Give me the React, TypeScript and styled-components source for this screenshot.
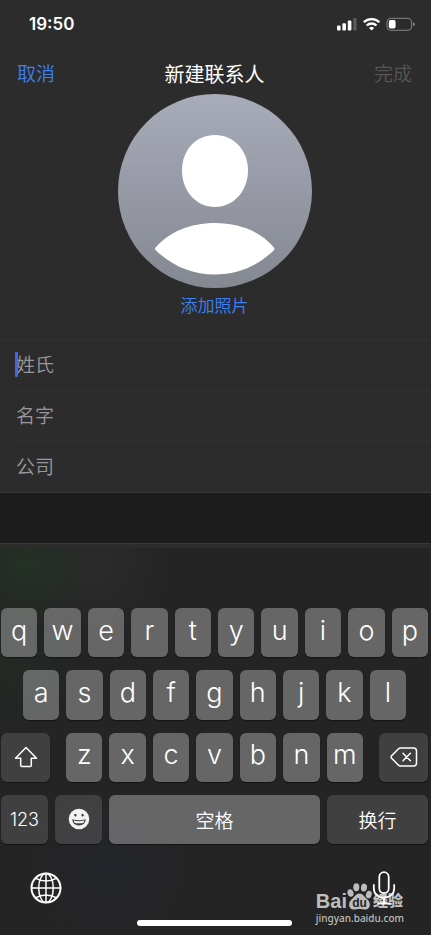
import React from "react";
import styled, { createGlobalStyle } from "styled-components";

const GlobalStyle = createGlobalStyle`
  *, *::before, *::after { box-sizing: border-box; }
  html, body { margin: 0; background: #fff; }
  body, button, input {
    font-family: Inter, "Noto Sans CJK SC", sans-serif;
  }
  button { margin: 0; padding: 0; border: 0; background: none; color: inherit; }
`;

const Screen = styled.div`
  display: flex;
  flex-direction: column;
  min-height: 100vh;
  margin-right: 1px;
  background: #2c2c2c;
  color: #fff;
  overflow: hidden;
`;

const StatusBar = styled.div`
  display: flex;
  align-items: center;
  justify-content: space-between;
  height: 48px;
  padding: 0 16px 0 29px;
`;

const Clock = styled.time`
  font-size: 17px;
  line-height: 20px;
  font-weight: 600;
`;

const StatusIcons = styled.svg`
  display: block;
  width: 78px;
  height: 14px;
`;

const NavBar = styled.header`
  display: grid;
  grid-template-columns: 1fr auto 1fr;
  align-items: center;
  height: 46px;
  padding: 8px 19px 0 17px;
`;

const NavButton = styled.button<{ $end?: boolean }>`
  justify-self: ${(p) => (p.$end ? "end" : "start")};
  font-size: 19px;
  line-height: 28px;
  font-weight: 350;
  color: #3c82f6;
  &:disabled { color: #565656; }
`;

const Title = styled.h1`
  margin: 0;
  font-size: 20px;
  line-height: 28px;
  font-weight: 400;
`;

const PhotoArea = styled.section`
  display: flex;
  flex-direction: column;
  align-items: center;
  gap: 5px;
  height: 245px;
  padding-right: 2px;
`;

const Avatar = styled.svg`
  display: block;
  width: 194px;
  height: 194px;
`;

const PhotoButton = styled.button`
  font-size: 17px;
  line-height: 26px;
  font-weight: 350;
  color: #3c82f6;
`;

const Fields = styled.form`
  border-top: 1px solid #323232;
  border-bottom: 1px solid #383838;
`;

const Field = styled.label`
  position: relative;
  display: flex;
  align-items: center;
  height: 51px;
  margin-left: 15px;
  &:first-child { height: 50px; }
  & + & { border-top: 1px solid #333; }
`;

const Caret = styled.span`
  position: absolute;
  left: 0;
  top: 12px;
  width: 3px;
  height: 25px;
  border-radius: 1px;
  background: #4466e8;
`;

const TextInput = styled.input`
  width: 100%;
  padding: 2px 0 0 1px;
  border: 0;
  outline: 0;
  background: transparent;
  color: #fff;
  font-size: 19px;
  line-height: 28px;
  font-weight: 350;
  &::placeholder { color: #98989c; opacity: 1; }
`;

const Gap = styled.div`
  height: 50px;
  background: #1c1c1c;
`;

const NextGroup = styled.div`
  height: 5px;
  border-top: 1px solid #383838;
`;

const Keyboard = styled.section`
  display: flex;
  flex: 1;
  flex-direction: column;
  padding: 60px 3px 0 1px;
  background:
    radial-gradient(circle at 25px 16px, rgba(36, 52, 38, 0.8), rgba(36, 52, 38, 0) 70px),
    radial-gradient(circle at 95px 14px, rgba(48, 48, 48, 0.6), rgba(48, 48, 48, 0) 80px),
    radial-gradient(circle at 15px 120px, rgba(34, 46, 36, 0.6), rgba(34, 46, 36, 0) 60px),
    radial-gradient(circle at 110px 320px, rgba(36, 38, 46, 0.7), rgba(36, 38, 46, 0) 90px),
    #242424;
`;

const Keys = styled.div`
  display: grid;
  grid-template-rows: repeat(4, 1fr);
  gap: 13px;
  height: 236px;
`;

const KeyRow = styled.div<{ $columns: string; $inset?: boolean }>`
  display: grid;
  grid-template-columns: ${(p) => p.$columns};
  gap: 7px;
  padding: ${(p) => (p.$inset ? "0 22px" : "0")};
`;

const LetterRow = styled.div`
  display: grid;
  grid-template-columns: 49px 1fr 49px;
  gap: 16px;
`;

const Key = styled.button<{ $dark?: boolean }>`
  display: flex;
  align-items: center;
  justify-content: center;
  min-width: 0;
  border-radius: 6px;
  background: ${(p) => (p.$dark ? "rgba(255, 255, 255, 0.13)" : "rgba(255, 255, 255, 0.3)")};
  box-shadow: 0 1px 1px rgba(0, 0, 0, 0.45);
`;

const LetterKey = styled(Key)`
  padding-bottom: 4px;
  font-size: 27px;
  line-height: 34px;
  font-weight: 350;
`;

const NumberKey = styled(Key)`
  padding-top: 2px;
  font-size: 18px;
  line-height: 24px;
  font-weight: 350;
`;

const WordKey = styled(Key)`
  padding-top: 6px;
  font-size: 19px;
  line-height: 24px;
  font-weight: 350;
`;

const Icon = styled.svg<{ $w: number; $h: number }>`
  display: block;
  width: ${(p) => p.$w}px;
  height: ${(p) => p.$h}px;
`;

const Footer = styled.footer`
  position: relative;
  display: flex;
  flex: 1;
  flex-direction: column;
  align-items: center;
  justify-content: space-between;
  padding: 27px 29px 9px;
`;

const Tools = styled.div`
  position: relative;
  display: flex;
  align-items: center;
  justify-content: space-between;
  width: 100%;
  padding-right: 3px;
`;

const ToolButton = styled.button`
  display: flex;
`;

const HomeIndicator = styled.div`
  width: 155px;
  height: 6px;
  border-radius: 3px;
  background: #fff;
`;

const Watermark = styled.div`
  position: absolute;
  right: 24px;
  bottom: 10px;
  display: flex;
  flex-direction: column;
  color: #bdbdbd;
`;

const Brand = styled.div`
  display: flex;
  align-items: flex-end;
  height: 28px;
  font-family: "Liberation Sans", "Noto Sans CJK SC", sans-serif;
  font-size: 20px;
  line-height: 20px;
  font-weight: 700;
`;

const BrandSuffix = styled.span`
  margin-left: 1px;
  font-size: 15px;
  line-height: 20px;
  font-weight: 900;
`;

const SiteName = styled.div`
  font-family: "Noto Sans", sans-serif;
  font-size: 10px;
  line-height: 14px;
  font-weight: 500;
`;

const fields = ["姓氏", "名字", "公司"];

const letters = (row: string) =>
  row.split("").map((c) => (
    <LetterKey key={c} type="button">
      {c}
    </LetterKey>
  ));

export default function App() {
  return (
    <>
      <GlobalStyle />
      <Screen>
        <StatusBar>
          <Clock>19:50</Clock>
          <StatusIcons viewBox="0 0 78 14" fill="#fff" aria-hidden="true">
            <rect x="0" y="8.5" width="3.6" height="5" rx="1" />
            <rect x="5.4" y="6.3" width="3.6" height="7.2" rx="1" />
            <rect x="10.8" y="3.6" width="3.6" height="9.9" rx="1" />
            <rect x="16.2" y="1" width="3.4" height="12.5" rx="1" fill="#5a5a5a" />
            <g fill="none" stroke="#fff" strokeWidth="2.3">
              <path d="M26.800 5.200A11.300 11.300 0 0 1 42.400 5.200" />
              <path d="M29.700 8.500A7 7 0 0 1 39.500 8.500" />
            </g>
            <path d="M32 10.900a3.900 3.900 0 0 1 5.200 0L34.600 13.600z" />
            <rect x="50" y="1.3" width="24.6" height="12" rx="3.6" fill="none" stroke="#858585" />
            <rect x="51.8" y="3.1" width="6.8" height="8.4" rx="1.8" />
            <path d="M76 5.300q1.800.6 1.800 2t-1.800 2z" fill="#858585" />
          </StatusIcons>
        </StatusBar>

        <NavBar>
          <NavButton type="button">取消</NavButton>
          <Title>新建联系人</Title>
          <NavButton type="button" $end disabled>
            完成
          </NavButton>
        </NavBar>

        <PhotoArea>
          <Avatar viewBox="0 0 194 194" aria-hidden="true">
            <defs>
              <linearGradient id="avatarFill" x1="0" y1="0" x2="0" y2="1">
                <stop offset="0" stopColor="#a8abb9" />
                <stop offset="1" stopColor="#848891" />
              </linearGradient>
            </defs>
            <circle cx="97" cy="97" r="97" fill="url(#avatarFill)" />
            <path
              fill="#fff"
              d="M97 41c19 0 33 15.500 33 35.500S116 113 97 113 64 97 64 76.500 78 41 97 41z"
            />
            <path
              fill="#fff"
              d="M37.500 153.500C51 138 72 129 97 129s46 9 59 24.500q1 1.200 0 2.400C140 172 120 180.500 97 180.500S54 172 37.500 155.900q-1-1.200 0-2.400z"
            />
          </Avatar>
          <PhotoButton type="button">添加照片</PhotoButton>
        </PhotoArea>

        <Fields>
          {fields.map((name, i) => (
            <Field key={name}>
              <TextInput type="text" placeholder={name} aria-label={name} />
              {i === 0 && <Caret />}
            </Field>
          ))}
        </Fields>
        <Gap />
        <NextGroup />

        <Keyboard>
          <Keys>
            <KeyRow $columns="repeat(10, 1fr)">{letters("qwertyuiop")}</KeyRow>
            <KeyRow $columns="repeat(9, 1fr)" $inset>
              {letters("asdfghjkl")}
            </KeyRow>
            <LetterRow>
              <Key type="button" $dark aria-label="Shift">
                <Icon $w={24} $h={22} viewBox="0 0 24 22" fill="none" stroke="#fff" strokeWidth="1.5" strokeLinejoin="round">
                  <path d="M12 1.500 22.500 12.300H17.300V19.200Q17.300 20.500 16 20.500H8Q6.700 20.500 6.700 19.200V12.300H1.500z" />
                </Icon>
              </Key>
              <KeyRow $columns="repeat(7, 1fr)">{letters("zxcvbnm")}</KeyRow>
              <Key type="button" $dark aria-label="Delete">
                <Icon $w={28} $h={22} viewBox="0 0 28 22" fill="none" stroke="#fff" strokeWidth="1.5" strokeLinecap="round" strokeLinejoin="round">
                  <path d="M10.500 2H23.500Q26.500 2 26.500 5V17Q26.500 20 23.500 20H10.500Q9.300 20 8.300 19L1.600 12.200Q.6 11 1.600 9.800L8.300 3Q9.300 2 10.500 2z" />
                  <path d="M13 7.300l7.400 7.400M20.400 7.300L13 14.700" />
                </Icon>
              </Key>
            </LetterRow>
            <KeyRow $columns="47px 47px 1fr 101px">
              <NumberKey type="button" $dark>
                123
              </NumberKey>
              <Key type="button" $dark aria-label="Emoji">
                <Icon $w={22} $h={22} viewBox="0 0 22 22">
                  <circle cx="11" cy="11" r="10.3" fill="#f2f2f2" />
                  <ellipse cx="7.4" cy="7.2" rx="1.1" ry="1.4" fill="#404040" />
                  <ellipse cx="14.6" cy="7.2" rx="1.1" ry="1.4" fill="#404040" />
                  <path d="M4.300 11.300Q11 13.300 17.700 11.300C17.500 15.500 14.800 17.500 11 17.500S4.500 15.500 4.300 11.300z" fill="#404040" />
                  <path d="M5.600 12.600Q11 14 16.400 12.600L15.600 14.700Q11 15.900 6.400 14.700z" fill="#f2f2f2" />
                </Icon>
              </Key>
              <WordKey type="button">空格</WordKey>
              <WordKey type="button" $dark>
                换行
              </WordKey>
            </KeyRow>
          </Keys>

          <Footer>
            <Watermark>
              <Brand>
                Bai
                <Icon $w={25} $h={28} viewBox="0 0 25 28" fill="#bdbdbd" aria-hidden="true">
                  <ellipse cx="3.5" cy="10" rx="3" ry="3.8" transform="rotate(-15 3.500 10)" />
                  <ellipse cx="9.3" cy="4.2" rx="3" ry="4" />
                  <ellipse cx="17" cy="4.6" rx="3" ry="4" transform="rotate(8 17 4.600)" />
                  <ellipse cx="21.8" cy="11.5" rx="2.9" ry="3.8" transform="rotate(15 21.800 11.500)" />
                  <path d="M12.500 10.500C16 10.500 17.500 14 20 16C24.500 19.500 23.500 26.500 18.500 26.500C16 26.500 15 26 12.500 26S9 26.500 6.500 26.500C1.500 26.500 .5 19.500 5 16C7.500 14 9 10.500 12.500 10.500z" />
                  <text x="12.5" y="24" textAnchor="middle" fill="#242424" fontFamily="Liberation Sans, sans-serif" fontSize="12" fontWeight="700">
                    du
                  </text>
                </Icon>
                <BrandSuffix>经验</BrandSuffix>
              </Brand>
              <SiteName>jingyan.baidu.com</SiteName>
            </Watermark>
            <Tools>
              <ToolButton type="button" aria-label="Next keyboard">
                <Icon $w={32} $h={32} viewBox="0 0 32 32" fill="none" stroke="#fff" strokeWidth="1.5">
                  <circle cx="16" cy="16" r="14.5" strokeWidth="2" />
                  <ellipse cx="16" cy="16" rx="7.3" ry="14.5" />
                  <path d="M16 1.500V30.500M1.500 16H30.500M5.800 6.300Q16 11.800 26.200 6.300M5.800 25.700Q16 20.200 26.200 25.700" />
                </Icon>
              </ToolButton>
              <ToolButton type="button" aria-label="Dictate">
                <Icon $w={24} $h={34} viewBox="0 0 24 34" fill="none" stroke="#fff" strokeWidth="1.8" strokeLinecap="round">
                  <rect x="7.3" y="1.2" width="9.4" height="21" rx="4.7" />
                  <path d="M1.800 14V17.200C1.800 23 6 26.500 12 26.500S22.200 23 22.200 17.200V14M12 26.500V32.300M6 32.500H18" />
                </Icon>
              </ToolButton>
            </Tools>
            <HomeIndicator />
          </Footer>
        </Keyboard>
      </Screen>
    </>
  );
}
